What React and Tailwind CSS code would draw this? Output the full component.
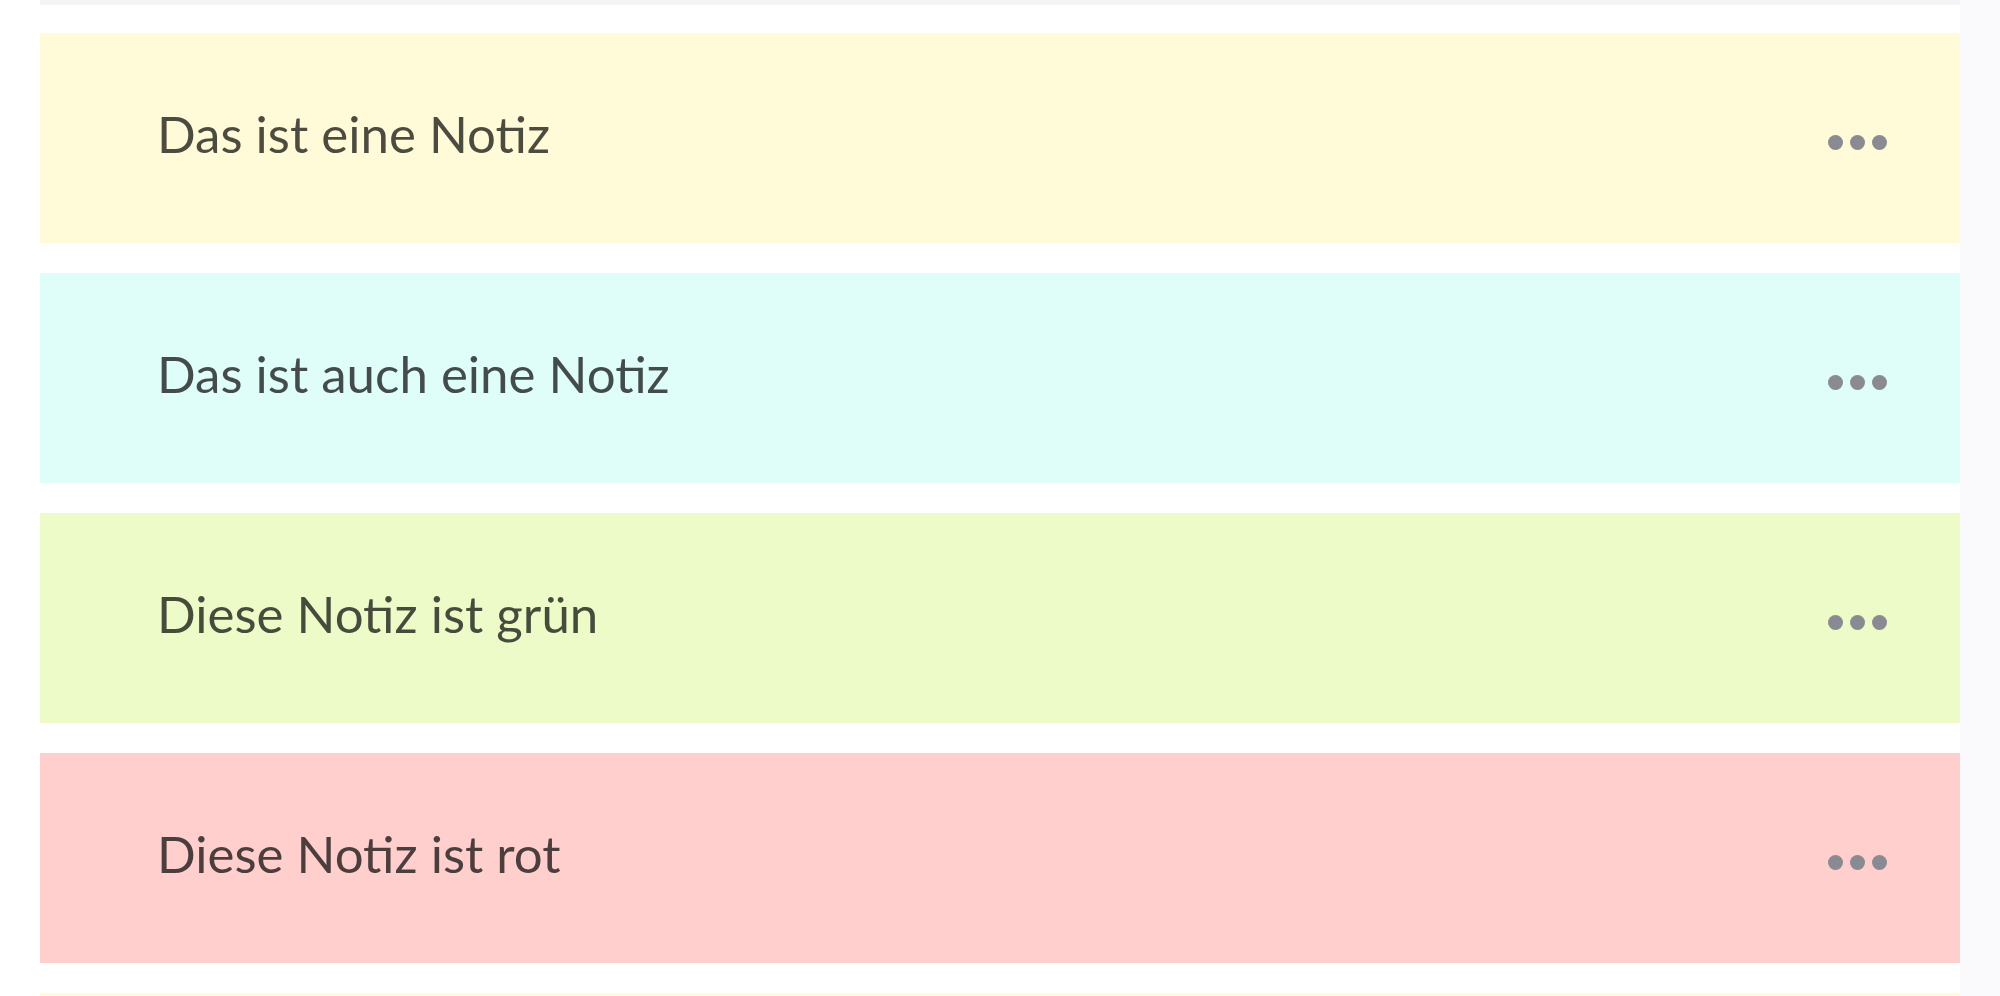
const notes = [
  { text: 'Das ist eine Notiz', bg: 'bg-[#fffbd8]' },
  { text: 'Das ist auch eine Notiz', bg: 'bg-[#dffdf9]' },
  { text: 'Diese Notiz ist grün', bg: 'bg-[#ecfbc8]' },
  { text: 'Diese Notiz ist rot', bg: 'bg-[#ffcfcd]' },
]

function Dots() {
  return (
    <div className="flex items-center gap-[7px] mt-[9px]">
      <span className="w-[15px] h-[15px] rounded-full bg-[#8a8a92]" />
      <span className="w-[15px] h-[15px] rounded-full bg-[#8a8a92]" />
      <span className="w-[15px] h-[15px] rounded-full bg-[#8a8a92]" />
    </div>
  )
}

export default function App() {
  return (
    <div className="h-[996px] overflow-hidden flex bg-white" style={{ fontFamily: 'Lato, "Open Sans", sans-serif' }}>
      <div className="flex-1 pl-[40px]">
        {/* bottom edge of the note above */}
        <div className="h-[5px] bg-[#f4f4f5]" />
        <div className="flex flex-col gap-[30px] pt-[28px]">
          {notes.map((note, i) => (
            <div key={i} className={`h-[210px] shrink-0 flex items-center justify-between pl-[117px] pr-[73px] ${note.bg}`}>
              <span className="text-[51px] text-black/70 -mt-[8px]">{note.text}</span>
              <Dots />
            </div>
          ))}
          {/* top of the next note, cut off by the viewport */}
          <div className="h-[210px] shrink-0 bg-[#fffbd8]" />
        </div>
      </div>
      <div className="w-[40px] bg-[#fafafc]" />
    </div>
  )
}
